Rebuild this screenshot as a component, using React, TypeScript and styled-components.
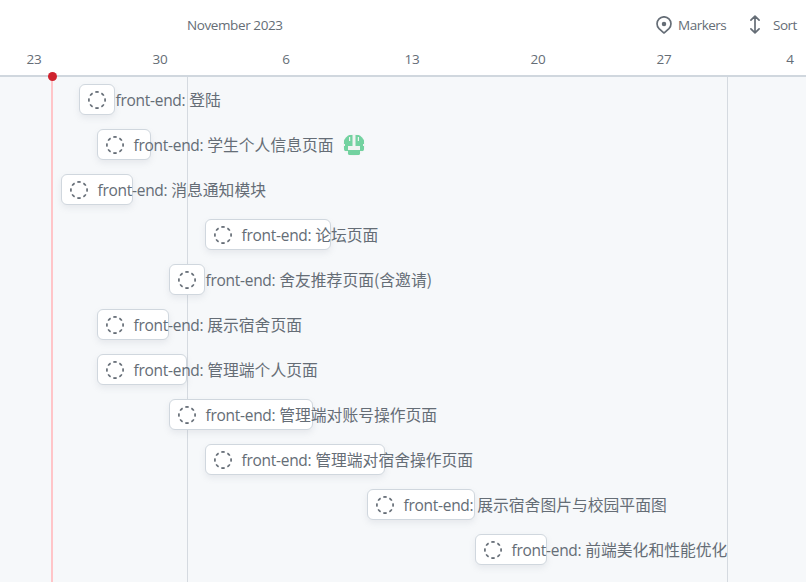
import React from "react";
import styled, { createGlobalStyle } from "styled-components";

const GlobalStyle = createGlobalStyle`
  *, *::before, *::after { box-sizing: border-box; }
  body {
    margin: 0;
    background: #fff;
    color: #656d76;
    font-family: "Open Sans", "Noto Sans CJK SC", sans-serif;
    overflow: hidden;
  }
`;

const Roadmap = styled.main`
  width: 806px;
  height: 582px;
  display: flex;
  flex-direction: column;
  overflow: hidden;
`;

const Header = styled.header`
  height: 77px;
  flex: none;
  border-bottom: 2px solid #d0d7de;
  font-size: 13.5px;
`;

const Toolbar = styled.div`
  height: 50px;
  display: flex;
  align-items: center;
  padding-left: 187px;
  white-space: nowrap;
`;

const Month = styled.span`
  width: 468px;
  letter-spacing: -0.4px;
`;

const Action = styled.button<{ $gap: number; $width: number }>`
  display: flex;
  flex: none;
  align-items: center;
  gap: ${(p) => p.$gap}px;
  width: ${(p) => p.$width}px;
  padding: 0;
  border: 0;
  background: none;
  color: inherit;
  font: inherit;
  letter-spacing: -0.5px;

  svg {
    flex: none;
  }
`;

const Weeks = styled.div`
  display: flex;
  margin-left: -29px;
  line-height: 19px;
  letter-spacing: -0.3px;
`;

const Week = styled.span`
  flex: 0 0 126px;
  text-align: center;
`;

const Canvas = styled.section`
  position: relative;
  flex: 1;
  padding-top: 1px;
  background: #f6f8fa;
`;

const GridLine = styled.div<{ $x: number }>`
  position: absolute;
  top: 0;
  bottom: 0;
  left: ${(p) => p.$x}px;
  width: 1px;
  background: #d5dae0;
`;

const Today = styled.div`
  position: absolute;
  top: 0;
  bottom: 0;
  left: 51px;
  width: 2px;
  background: #ffc5c8;

  &::before {
    content: "";
    position: absolute;
    top: -5px;
    left: -3px;
    width: 9px;
    height: 9px;
    border-radius: 50%;
    background: #cf222e;
  }
`;

const Row = styled.div<{ $start: number }>`
  position: relative;
  height: 45px;
  padding-top: 6px;
  margin-left: ${(p) => p.$start}px;
`;

const Bar = styled.div<{ $width: number }>`
  display: flex;
  align-items: center;
  width: ${(p) => p.$width}px;
  height: 31px;
  padding-left: 8px;
  border: 1px solid #d0d7de;
  border-radius: 6px;
  background: #fff;
  box-shadow: 0 3px 6px rgba(140, 149, 159, 0.15);
  white-space: nowrap;

  > svg {
    flex: none;
  }
`;

const Label = styled.span`
  display: flex;
  align-items: center;
  flex: none;
  margin-left: 9.5px;
  font-size: 15.8px;
  line-height: 22px;
`;

const Prefix = styled.span`
  width: 73.7px;
  font-size: 15.5px;
  letter-spacing: -0.28px;
`;

const Title = styled.span`
  font-family: "Noto Sans CJK SC", sans-serif;
`;

const Avatar = styled.svg`
  flex: none;
  margin-left: 9px;
  border-radius: 50%;
`;

const DraftIcon = () => (
  <svg width="18" height="18" viewBox="0 0 18 18" fill="none" stroke="currentColor" strokeWidth="1.7">
    <circle cx="9" cy="9" r="8.1" pathLength="80" strokeDasharray="5.4 4.6" strokeDashoffset="2.7" />
  </svg>
);

const PinIcon = () => (
  <svg width="18" height="18" viewBox="0 0 16 16" fill="none" stroke="currentColor" strokeWidth="1.5">
    <path d="M3.6 11.3a6.2 6.2 0 1 1 8.8 0L8.2 15a.3.3 0 0 1-.4 0Z" />
    <circle cx="8" cy="7" r="2" fill="currentColor" stroke="none" />
  </svg>
);

const SortIcon = () => (
  <svg width="12" height="20" viewBox="0 0 12 20" fill="none" stroke="currentColor" strokeWidth="1.7" strokeLinecap="round" strokeLinejoin="round">
    <path d="M6 1.5v16M1.9 5.2 6 1.2l4.1 4M1.9 13.8 6 17.8l4.1-4" />
  </svg>
);

const Identicon = () => (
  <Avatar width="22" height="22" viewBox="0 0 22 22">
    <rect width="22" height="22" fill="#f0f3f2" />
    <path fill="#73d2a0" d="M3 1h16l2 3v6h-1v2h1v5h-4v4H5v-4H1v-5h1v-2H1V4Z" />
    <path fill="#f0f3f2" d="M9.5 0h3v12H17v4H5v-4h4.5Z" />
    <path fill="#f0f3f2" d="M6 3h1.2v4H6ZM14.8 3H16v4h-1.2Z" />
  </Avatar>
);

interface Task {
  start: number;
  width: number;
  title: string;
  assigned?: boolean;
}

const tasks: Task[] = [
  { start: 79, width: 36, title: "登陆" },
  { start: 97, width: 54, title: "学生个人信息页面", assigned: true },
  { start: 61, width: 72, title: "消息通知模块" },
  { start: 205, width: 126, title: "论坛页面" },
  { start: 169, width: 36, title: "舍友推荐页面(含邀请)" },
  { start: 97, width: 72, title: "展示宿舍页面" },
  { start: 97, width: 90, title: "管理端个人页面" },
  { start: 169, width: 144, title: "管理端对账号操作页面" },
  { start: 205, width: 180, title: "管理端对宿舍操作页面" },
  { start: 367, width: 108, title: "展示宿舍图片与校园平面图" },
  { start: 475, width: 72, title: "前端美化和性能优化" },
];

const weeks = [23, 30, 6, 13, 20, 27, 4];

export default function App() {
  return (
    <>
      <GlobalStyle />
      <Roadmap>
        <Header>
          <Toolbar>
            <Month>November 2023</Month>
            <Action $gap={5} $width={94}>
              <PinIcon />
              Markers
            </Action>
            <Action $gap={12} $width={57}>
              <SortIcon />
              Sort
            </Action>
          </Toolbar>
          <Weeks>
            {weeks.map((day) => (
              <Week key={day}>{day}</Week>
            ))}
          </Weeks>
        </Header>
        <Canvas>
          <GridLine $x={187} />
          <GridLine $x={727} />
          <Today />
          {tasks.map((task) => (
            <Row key={task.title} $start={task.start}>
              <Bar $width={task.width}>
                <DraftIcon />
                <Label>
                  <Prefix>front-end:</Prefix>
                  <Title>{task.title}</Title>
                  {task.assigned && <Identicon />}
                </Label>
              </Bar>
            </Row>
          ))}
        </Canvas>
      </Roadmap>
    </>
  );
}
